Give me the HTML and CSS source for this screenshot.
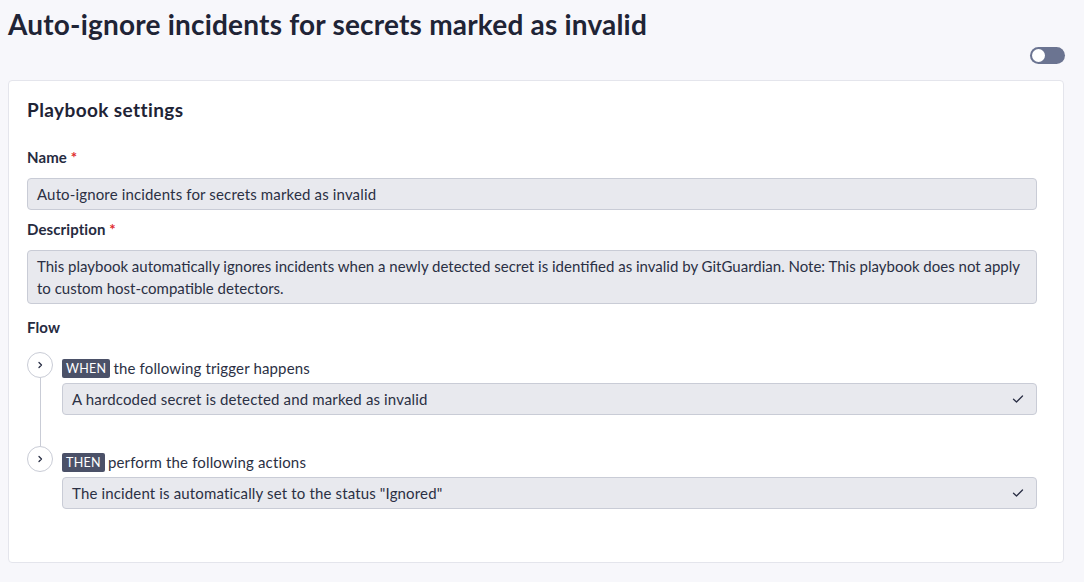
FILE: index.html
```html
<!DOCTYPE html>
<html>
<head>
<meta charset="utf-8">
<link rel="stylesheet" href="styles.css">
</head>
<body>
<div class="page">
  <header class="header">
    <h1 class="title">Auto-ignore incidents for secrets marked as invalid</h1>
    <div class="toggle-row"><span class="toggle"><span class="knob"></span></span></div>
  </header>
  <section class="card">
    <h2 class="card-title">Playbook settings</h2>
    <div class="field">
      <label class="label">Name <span class="req">*</span></label>
      <div class="input">Auto-ignore incidents for secrets marked as invalid</div>
    </div>
    <div class="field field-desc">
      <label class="label">Description <span class="req">*</span></label>
      <div class="input textarea">This playbook automatically ignores incidents when a newly detected secret is identified as invalid by GitGuardian. Note: This playbook does not apply to custom host-compatible detectors.</div>
    </div>
    <div class="field">
      <label class="label">Flow</label>
      <div class="flow">
        <div class="step">
          <div class="rail">
            <span class="circle"><svg width="8" height="8" viewBox="0 0 8 8"><path d="M3 1.5 L5.5 4 L3 6.5" fill="none" stroke="#2a2f45" stroke-width="1.3" stroke-linecap="round" stroke-linejoin="round"/></svg></span>
            <span class="line"></span>
          </div>
          <div class="step-body">
            <div class="step-head"><span class="badge">WHEN</span> the following trigger happens</div>
            <div class="input select"><span>A hardcoded secret is detected and marked as invalid</span><svg class="check" width="12" height="10" viewBox="0 0 12 10"><path d="M1.5 5.2 L4.5 8 L10.5 2" fill="none" stroke="#2a2f45" stroke-width="1.3" stroke-linecap="round" stroke-linejoin="round"/></svg></div>
          </div>
        </div>
        <div class="step last">
          <div class="rail">
            <span class="circle"><svg width="8" height="8" viewBox="0 0 8 8"><path d="M3 1.5 L5.5 4 L3 6.5" fill="none" stroke="#2a2f45" stroke-width="1.3" stroke-linecap="round" stroke-linejoin="round"/></svg></span>
          </div>
          <div class="step-body">
            <div class="step-head"><span class="badge">THEN</span> perform the following actions</div>
            <div class="input select"><span>The incident is automatically set to the status "Ignored"</span><svg class="check" width="12" height="10" viewBox="0 0 12 10"><path d="M1.5 5.2 L4.5 8 L10.5 2" fill="none" stroke="#2a2f45" stroke-width="1.3" stroke-linecap="round" stroke-linejoin="round"/></svg></div>
          </div>
        </div>
      </div>
    </div>
  </section>
</div>
</body>
</html>
```
FILE: styles.css
```css
* { box-sizing: border-box; }
html, body { margin: 0; padding: 0; }
body {
  background: #f7f7fb;
  font-family: Lato, "Noto Sans", sans-serif;
  color: #2b3044;
}
.page { padding: 0 20px 0 8px; }
.header { padding-top: 7px; }
.title {
  margin: 0;
  font-size: 28px;
  font-weight: 700;
  line-height: 34px;
  color: #1f2436;
  letter-spacing: 0.2px;
}
.toggle-row { display: flex; justify-content: flex-end; padding: 6px 0 0; height: 39px; margin-right: -1px; }
.toggle {
  width: 35px; height: 17px; border-radius: 9px;
  background: #6b7491; display: flex; align-items: center; padding-left: 2px;
}
.knob { width: 13px; height: 13px; border-radius: 50%; background: #fff; }
.card {
  background: #fff;
  border: 1px solid #e4e5ec;
  border-radius: 4px;
  padding: 17px 26px 53px 18px;
}
.card-title {
  margin: 0 0 25px;
  font-size: 19px;
  font-weight: 700;
  line-height: 24px;
  color: #1f2436;
  letter-spacing: 0.4px;
}
.field { margin-bottom: 9px; }
.field:last-child { margin-bottom: 0; }
.field-desc { margin-bottom: 13px; }
.label {
  display: block;
  font-size: 15px;
  font-weight: 700;
  line-height: 20px;
  margin-bottom: 11px;
  color: #262b3f;
  letter-spacing: 0.1px;
}
.req { color: #e02b2b; }
.input {
  background: #e8e9ee;
  border: 1px solid #c9ccd6;
  border-radius: 4px;
  font-size: 15px;
  line-height: 22px;
  padding: 4px 9px;
  color: #2b3044;
  letter-spacing: 0.15px;
}
.textarea { padding: 4px 9px 4px; letter-spacing: 0; }
.flow { padding-top: 4px; }
.step { display: flex; gap: 9px; }
.rail { width: 26px; display: flex; flex-direction: column; align-items: center; flex: none; }
.circle {
  width: 26px; height: 26px; border-radius: 50%;
  border: 1px solid #c9ccd6; background: #fff;
  display: flex; align-items: center; justify-content: center; flex: none;
}
.line { width: 1px; background: #c9ccd6; flex: 1; }
.step-body { flex: 1; padding-top: 7px; padding-bottom: 31px; }
.step.last .step-body { padding-bottom: 0; }
.step-head { font-size: 15px; line-height: 19px; height: 19px; margin-bottom: 5px; letter-spacing: 0.15px; display: flex; align-items: center; gap: 3px; }
.badge {
  display: inline-block;
  background: #4b5168; color: #fff;
  font-size: 12.5px; line-height: 19px; padding: 0 4px;
  border-radius: 2px; letter-spacing: 0.3px;
}
.select { display: flex; justify-content: space-between; align-items: center; padding-right: 12px; }
.check { flex: none; }
```
